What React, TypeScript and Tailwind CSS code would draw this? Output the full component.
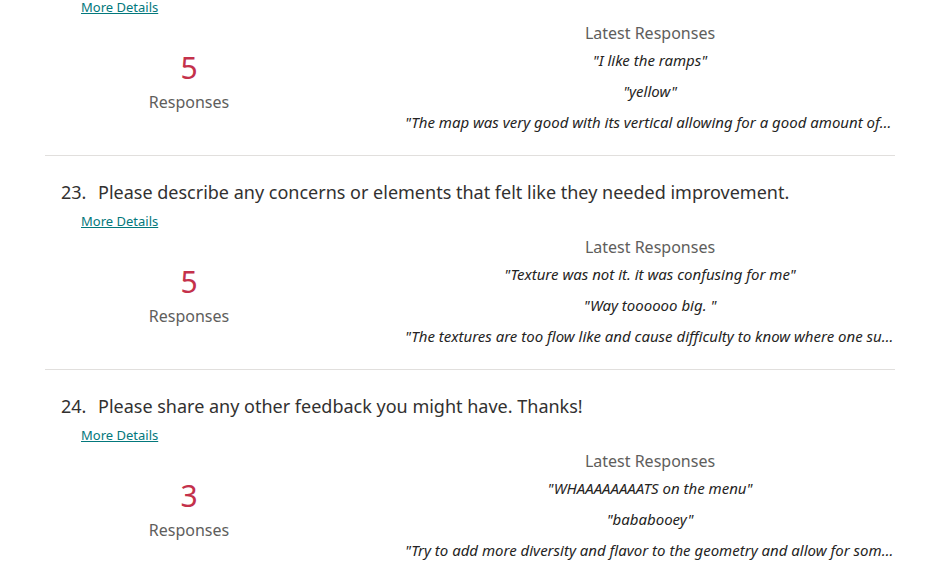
const font = { fontFamily: '"Noto Sans", "Open Sans", sans-serif' };

interface Question {
  num: number;
  title: string;
  count: number;
  quotes: string[];
}

const questions: Question[] = [
  {
    num: 22,
    title: 'What did you like about the map?',
    count: 5,
    quotes: [
      'I like the ramps',
      'yellow',
      'The map was very good with its vertical allowing for a good amount of movement and different routes to take',
    ],
  },
  {
    num: 23,
    title: 'Please describe any concerns or elements that felt like they needed improvement.',
    count: 5,
    quotes: [
      'Texture was not it. it was confusing for me',
      'Way toooooo big. ',
      'The textures are too flow like and cause difficulty to know where one surface ends and another begins',
    ],
  },
  {
    num: 24,
    title: 'Please share any other feedback you might have. Thanks!',
    count: 3,
    quotes: [
      'WHAAAAAAAATS on the menu',
      'bababooey',
      'Try to add more diversity and flavor to the geometry and allow for some more interesting paths',
    ],
  },
];

function QuestionBlock({ q }: { q: Question }) {
  return (
    <div className="border-b border-[#e1dfdd] pt-[24px] pb-[17px]">
      <div className="pl-4 text-[18px] leading-[24px] text-[#323130]">
        <span className="inline-block w-[37px]">{q.num}.</span>
        {q.title}
      </div>
      <div className="pl-9 mt-2 text-[13px] leading-[18px]">
        <a href="#" className="text-[#03787c] underline">More Details</a>
      </div>
      <div className="flex mt-[6px]">
        <div className="w-[288px] flex flex-col items-center justify-center pt-[3px]">
          <div className="text-[30px] leading-[36px] text-[#c4314b]">{q.count}</div>
          <div className="mt-[5px] text-[16px] leading-[22px] text-[#605e5c]">Responses</div>
        </div>
        <div className="ml-[72px] w-[490px] text-center">
          <div className="text-[16px] leading-[23px] text-[#605e5c]">Latest Responses</div>
          {q.quotes.map((t, i) => (
            <div key={i} className="truncate italic text-[15px] leading-[31px] text-[#252423]">
              "{t}"
            </div>
          ))}
        </div>
      </div>
    </div>
  );
}

export default function App() {
  return (
    <div className="w-[943px] h-[580px] overflow-hidden bg-white" style={font}>
      <div className="w-[850px] ml-[45px] -mt-[58px]">
        {questions.map((q) => (
          <QuestionBlock key={q.num} q={q} />
        ))}
      </div>
    </div>
  );
}
